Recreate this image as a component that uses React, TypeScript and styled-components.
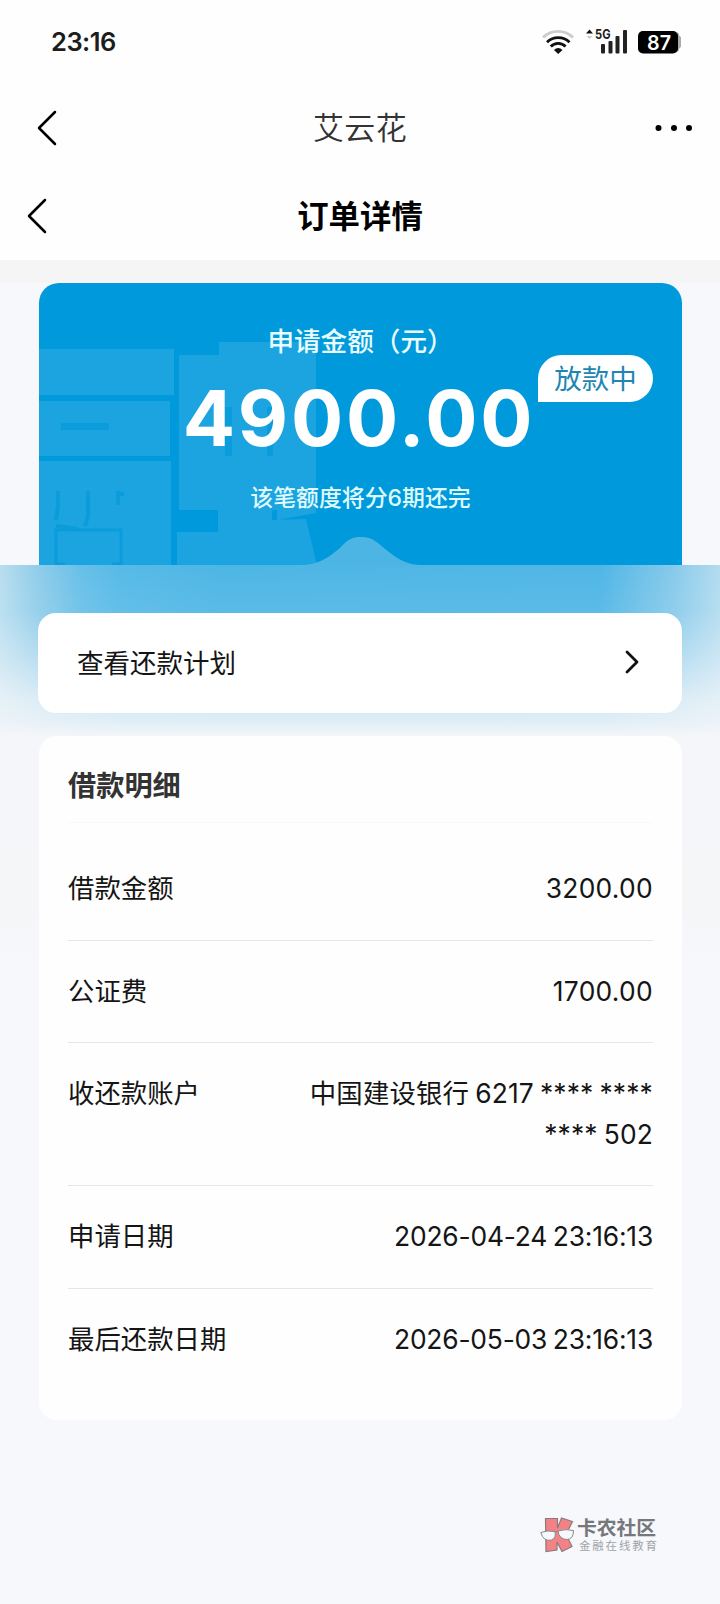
import React from 'react';
import styled, { createGlobalStyle } from 'styled-components';

const Global = createGlobalStyle`
  * { box-sizing: border-box; }
  body { margin: 0; background: #f6f7fc; font-family: Inter, "Noto Sans CJK SC", sans-serif; color: #151515; }
`;

const Page = styled.main`
  display: flex;
  flex-direction: column;
  width: 720px;
  height: 1604px;
  overflow: hidden;
  background: #f6f8fc;
`;

const StatusBar = styled.header`
  display: flex;
  align-items: center;
  justify-content: space-between;
  height: 83px;
  padding: 0 39px 0 51px;
  background: #fefefe;
`;

const Clock = styled.span`
  font-size: 25.5px;
  font-weight: 600;
  letter-spacing: -0.5px;
  line-height: 30px;
  color: #1c1c1c;
`;

const NavBar = styled.div<{ $height: number; $inset: number }>`
  display: grid;
  grid-template-columns: 60px 1fr 60px;
  align-items: center;
  height: ${(p) => p.$height}px;
  padding: 0 ${(p) => p.$inset}px;
  background: #fefefe;
`;

const AppName = styled.span`
  padding-bottom: 4px;
  text-align: center;
  font-size: 31px;
  letter-spacing: 0.4px;
  font-weight: 350;
  color: #333;
`;

const PageTitle = styled.h1`
  margin: 0;
  padding-bottom: 4px;
  text-align: center;
  font-size: 31.4px;
  font-weight: 700;
  color: #000;
`;

const Strip = styled.div`
  height: 23px;
  background: #f5f5f6;
`;

const Hero = styled.section`
  position: relative;
  display: flex;
  flex-direction: column;
  align-items: center;
  width: 643px;
  height: 282px;
  margin-left: 39px;
  border-radius: 20px 20px 0 0;
  background: #009adc;
  color: #fff;
  overflow: hidden;
`;

const HeroArt = styled.svg`
  position: absolute;
  inset: 0;
`;

const HeroLabel = styled.div`
  position: relative;
  margin-top: 38px;
  font-size: 26.6px;
  line-height: 40px;
  color: #e9fcff;
  font-weight: 500;
`;

const Amount = styled.div`
  position: relative;
  margin: 12px 3px 0 0;
  height: 90px;
  line-height: 90px;
  font-size: 77.5px;
  font-weight: 700;
  letter-spacing: 2.8px;
`;

const HeroNote = styled.div`
  position: relative;
  margin-top: 18px;
  line-height: 34px;
  font-size: 22.9px;
  font-weight: 500;
  color: #dffaff;
`;

const StatusBadge = styled.span`
  position: absolute;
  top: 72px;
  left: 499px;
  width: 115px;
  height: 47px;
  border-radius: 24px 24px 24px 0;
  background: #fff;
  color: #1d86b3;
  font-size: 27.5px;
  line-height: 49px;
  text-align: center;
`;

const GlowBand = styled.section`
  height: 171px;
  padding: 48px 38px 0;
  background:
    linear-gradient(180deg, rgba(244, 246, 249, 0) 0%, rgba(244, 246, 249, 0.08) 28%, rgba(244, 246, 249, 0.35) 50%, rgba(244, 246, 249, 0.76) 78%, rgba(244, 246, 249, 0.88) 92%, rgba(244, 246, 249, 1) 100%),
    linear-gradient(90deg, #b8deef 0, #90cdea 38px, #68c0e8 80px, #57bae7 120px, #4db6e5 220px, #4fb6e6 600px, #84c9ea 670px, #b3dcf0 720px);
`;

const PlanLink = styled.a`
  display: flex;
  align-items: center;
  justify-content: space-between;
  height: 100px;
  padding: 0 40px 3px 39px;
  border-radius: 18px;
  background: #fff;
  font-size: 26.5px;
`;

const DetailArea = styled.section`
  padding: 0 38px 0 39px;
  background: linear-gradient(180deg, #f4f6f9 0, #f5f6f8 170px, #f6f8fc 240px);
`;

const DetailCard = styled.div`
  height: 684px;
  padding: 0 29px;
  border-radius: 18px;
  background: #fefefe;
`;

const DetailTitle = styled.h2`
  height: 87px;
  margin: 0 0 15px;
  border-bottom: 1px solid #f9f9f9;
  line-height: 100px;
  font-size: 28.2px;
  font-weight: 700;
  color: #333;
`;

const Row = styled.div<{ $last?: boolean }>`
  display: flex;
  justify-content: space-between;
  padding: 30px 0 31px;
  border-bottom: 1px solid ${(p) => (p.$last ? 'transparent' : '#e6e6e6')};
  font-size: 26.4px;
  line-height: 40.5px;
`;

const Value = styled.span<{ $tracking: number }>`
  width: 365px;
  text-align: right;
  letter-spacing: ${(p) => p.$tracking}px;
  word-spacing: -1.5px;
`;

const Watermark = styled.footer`
  display: flex;
  align-items: center;
  gap: 3px;
  margin: 97px 0 0 540px;
`;

const BrandText = styled.div`
  display: flex;
  flex-direction: column;
`;

const BrandName = styled.span`
  font-size: 19.8px;
  line-height: 20px;
  font-weight: 700;
  color: #76777b;
`;

const BrandTag = styled.span`
  margin-top: 1px;
  padding-left: 2px;
  font-size: 11.5px;
  line-height: 14px;
  letter-spacing: 1.8px;
  color: #a2a3a7;
`;

const BackIcon = () => (
  <svg width="32" height="40" viewBox="0 0 32 40" fill="none" stroke="#000" strokeWidth="2.5">
    <path d="M30 4 14 20l16 16" strokeLinecap="round" strokeLinejoin="round" />
  </svg>
);

const StatusIcons = () => (
  <svg width="140" height="30" viewBox="0 0 140 30">
    <g fill="none" strokeWidth="2.8">
      <path d="M2 10.5a21.5 21.5 0 0 1 30 0" stroke="#ccc" />
      <path d="M6 15.2a16 16 0 0 1 22.500 0" stroke="#111" />
      <path d="M9.800 19.500a10.400 10.400 0 0 1 14.800 0" stroke="#111" />
    </g>
    <path d="m17.200 27-4.300-4q4.300-4 8.600 0z" fill="#111" />
    <path d="m48.500 2.500 3.500 4h-7z" fill="#111" />
    <path d="m48.500 12-3-3h6z" fill="#ccc" />
    <text x="54" y="12" fontFamily="Inter, sans-serif" fontSize="13.500" fontWeight="700" textLength="15.500" lengthAdjust="spacingAndGlyphs" fill="#222">5G</text>
    <g fill="#222">
      <rect x="60" y="17" width="4" height="9.500" rx="1" />
      <rect x="67.500" y="14" width="4" height="12.500" rx="1" />
      <rect x="74.500" y="9" width="4" height="17.500" rx="1" />
      <rect x="82" y="3" width="4" height="23.500" rx="1" />
    </g>
    <path d="M136 5q2 1 2.500 4 2.500 1 2.500 6t-2.500 6q-.5 3-2.500 4z" fill="#aaa" />
    <rect x="97" y="4" width="40" height="22.500" rx="5" fill="#000" />
    <text x="106" y="22.600" fontFamily="Inter, sans-serif" fontSize="20" fontWeight="600" textLength="24" lengthAdjust="spacingAndGlyphs" fill="#fff">87</text>
  </svg>
);

const MoreIcon = () => (
  <svg width="60" height="12" viewBox="0 0 60 12">
    <circle cx="23.500" cy="6" r="3" />
    <circle cx="39" cy="6" r="3" />
    <circle cx="54" cy="6" r="3" />
  </svg>
);

const HeroBackdrop = () => (
  <HeroArt width="643" height="282" viewBox="0 0 643 282">
    <g fill="#1ba4e0">
      <path d="M0 66h135v46H0zM0 118h131v55H0zM0 178h132v104H0z" />
      <path d="M140 72h40V59h97v171l-39 7v-10h-5v10l34-1 11 46H138v-33h41v-22h-39z" />
    </g>
    <path d="M22 140h48v7H22zM186 124h7v49h-7zM228 124h6v49h-6z" fill="#0a9cdb" />
    <path d="M19 208v15l-2 14M49 208v25l-3 10M17 243l22 3M79 208v14M79 211h6" fill="none" stroke="#0a9cdb" strokeWidth="4" />
    <path d="M26 281h-9v-34h65v34h-9" fill="none" stroke="#0a9cdb" strokeWidth="3" />
    <path d="M262 282c17 0 27-7 39-17 8-9 12-11 22-11s15 5 23 12c13 10 21 16 37 16z" fill="#4db5e4" />
  </HeroArt>
);

const BrandMark = () => (
  <svg width="34" height="36" viewBox="0 0 34 36">
    <path
      d="M5.500 1.500h12V11l4-10 11 3.500-6.500 13L32 29.500 22 34.500 17 25v8l-11 1.500z"
      fill="#f28286"
      stroke="#8a7a7e"
      strokeWidth="1.200"
    />
    <g fill="#f6f8fc" stroke="#888" strokeWidth="1">
      <path d="M.8 15.500Q7 13 15 14.500q1.500 6-3.500 8.500-8 2-10.700-7.500z" />
      <path d="M18 14q8-2.500 15.500-.5 0 9-7 9-7.500-.5-8.500-8.500z" />
    </g>
    <path d="M14.800 15.500q1.700-1.500 3.400-.8" fill="none" stroke="#888" />
  </svg>
);

const details: { label: string; value: string; tracking: number }[] = [
  { label: '借款金额', value: '3200.00', tracking: 0.3 },
  { label: '公证费', value: '1700.00', tracking: 0.3 },
  { label: '收还款账户', value: '中国建设银行 6217 **** **** **** 502', tracking: 0.15 },
  { label: '申请日期', value: '2026-04-24 23:16:13', tracking: -0.2 },
  { label: '最后还款日期', value: '2026-05-03 23:16:13', tracking: -0.2 },
];

export default function App() {
  return (
    <Page>
      <Global />
      <StatusBar>
        <Clock>23:16</Clock>
        <StatusIcons />
      </StatusBar>
      <NavBar $height={89} $inset={25}>
        <BackIcon />
        <AppName>艾云花</AppName>
        <MoreIcon />
      </NavBar>
      <NavBar $height={88} $inset={15}>
        <BackIcon />
        <PageTitle>订单详情</PageTitle>
      </NavBar>
      <Strip />
      <Hero>
        <HeroBackdrop />
        <HeroLabel>申请金额（元）</HeroLabel>
        <Amount>4900.00</Amount>
        <HeroNote>该笔额度将分6期还完</HeroNote>
        <StatusBadge>放款中</StatusBadge>
      </Hero>
      <GlowBand>
        <PlanLink>
          查看还款计划
          <svg width="18" height="26" viewBox="0 0 18 26" fill="none" stroke="#111" strokeWidth="2.800">
            <path d="m3 3 10 10L3 23" strokeLinecap="round" strokeLinejoin="round" />
          </svg>
        </PlanLink>
      </GlowBand>
      <DetailArea>
        <DetailCard>
          <DetailTitle>借款明细</DetailTitle>
          {details.map((d, i) => (
            <Row key={d.label} $last={i === details.length - 1}>
              <span>{d.label}</span>
              <Value $tracking={d.tracking}>{d.value}</Value>
            </Row>
          ))}
        </DetailCard>
      </DetailArea>
      <Watermark>
        <BrandMark />
        <BrandText>
          <BrandName>卡农社区</BrandName>
          <BrandTag>金融在线教育</BrandTag>
        </BrandText>
      </Watermark>
    </Page>
  );
}
